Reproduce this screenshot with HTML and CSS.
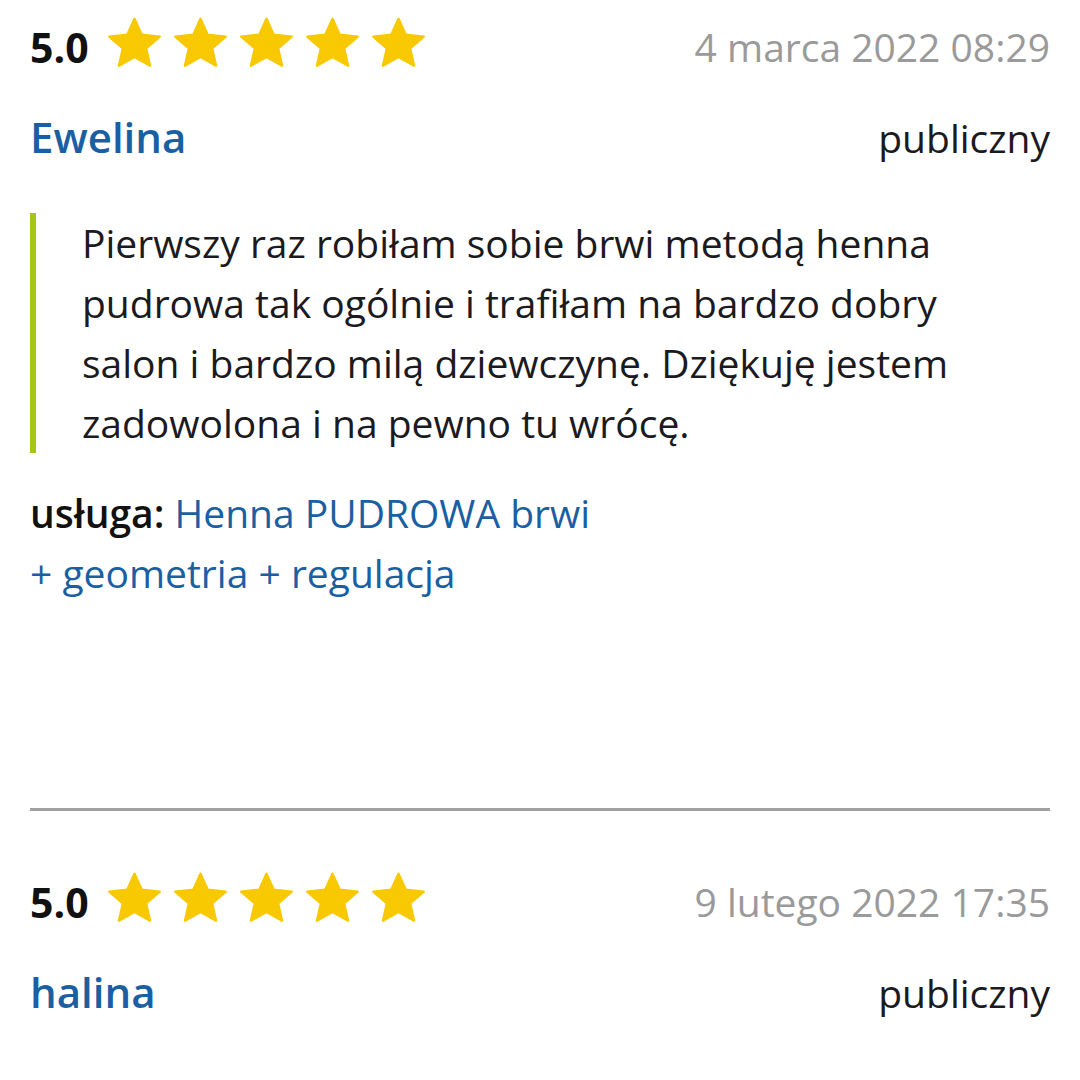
FILE: index.html
```html
<!DOCTYPE HTML>
<html>
<head>
<meta charset="utf-8">
<title>Opinie</title>
<link rel="stylesheet" href="styles.css">
</head>

<body>
<div class="reviews">
	<div class="review">
		<div class="review-head">
			<span class="score">5.0</span>
			<span class="stars">
				<svg viewBox="0 0 60 60"><polygon points="30,3 37.6,19.6 56.6,21.7 42.3,34.1 46.4,52.3 30,43 13.6,52.3 17.7,34.1 3.4,21.7 22.4,19.6" /></svg>
				<svg viewBox="0 0 60 60"><polygon points="30,3 37.6,19.6 56.6,21.7 42.3,34.1 46.4,52.3 30,43 13.6,52.3 17.7,34.1 3.4,21.7 22.4,19.6" /></svg>
				<svg viewBox="0 0 60 60"><polygon points="30,3 37.6,19.6 56.6,21.7 42.3,34.1 46.4,52.3 30,43 13.6,52.3 17.7,34.1 3.4,21.7 22.4,19.6" /></svg>
				<svg viewBox="0 0 60 60"><polygon points="30,3 37.6,19.6 56.6,21.7 42.3,34.1 46.4,52.3 30,43 13.6,52.3 17.7,34.1 3.4,21.7 22.4,19.6" /></svg>
				<svg viewBox="0 0 60 60"><polygon points="30,3 37.6,19.6 56.6,21.7 42.3,34.1 46.4,52.3 30,43 13.6,52.3 17.7,34.1 3.4,21.7 22.4,19.6" /></svg>
			</span>
			<span class="date">4 marca 2022 08:29</span>
		</div>
		<div class="review-meta">
			<a href="javascript:;" class="author">Ewelina</a>
			<span class="status">publiczny</span>
		</div>
		<blockquote class="review-text">Pierwszy raz robiłam sobie brwi metodą henna pudrowa tak ogólnie i trafiłam na bardzo dobry salon i bardzo milą dziewczynę. Dziękuję jestem zadowolona i na pewno tu wrócę.</blockquote>
		<p class="service"><b>usługa:</b> <a href="javascript:;">Henna PUDROWA brwi + geometria + regulacja</a></p>
	</div>

	<hr class="divider">

	<div class="review">
		<div class="review-head">
			<span class="score">5.0</span>
			<span class="stars">
				<svg viewBox="0 0 60 60"><polygon points="30,3 37.6,19.6 56.6,21.7 42.3,34.1 46.4,52.3 30,43 13.6,52.3 17.7,34.1 3.4,21.7 22.4,19.6" /></svg>
				<svg viewBox="0 0 60 60"><polygon points="30,3 37.6,19.6 56.6,21.7 42.3,34.1 46.4,52.3 30,43 13.6,52.3 17.7,34.1 3.4,21.7 22.4,19.6" /></svg>
				<svg viewBox="0 0 60 60"><polygon points="30,3 37.6,19.6 56.6,21.7 42.3,34.1 46.4,52.3 30,43 13.6,52.3 17.7,34.1 3.4,21.7 22.4,19.6" /></svg>
				<svg viewBox="0 0 60 60"><polygon points="30,3 37.6,19.6 56.6,21.7 42.3,34.1 46.4,52.3 30,43 13.6,52.3 17.7,34.1 3.4,21.7 22.4,19.6" /></svg>
				<svg viewBox="0 0 60 60"><polygon points="30,3 37.6,19.6 56.6,21.7 42.3,34.1 46.4,52.3 30,43 13.6,52.3 17.7,34.1 3.4,21.7 22.4,19.6" /></svg>
			</span>
			<span class="date">9 lutego 2022 17:35</span>
		</div>
		<div class="review-meta">
			<a href="javascript:;" class="author">halina</a>
			<span class="status">publiczny</span>
		</div>
	</div>
</div>
</body>
</html>
```

FILE: styles.css
```css
* {margin:0; padding:0;}
body {background:#fff; font-family:"Open Sans", "Noto Sans", sans-serif; color:#1a1a20;}
a {text-decoration:none; color:#1b5fa3;}

.reviews {padding:0 30px; overflow:hidden;}
.review {padding-top:17px;}

.review-head {display:flex; align-items:center; height:60px;}
.score {font-size:41px; font-weight:700; line-height:60px; color:#111;}
.stars {display:flex; gap:9px; margin-left:17px; margin-bottom:5px;}
.stars svg {width:57px; height:57px; display:block;}
.stars polygon {fill:#f8c800; stroke:#f8c800; stroke-width:2.5; stroke-linejoin:round;}
.date {margin-left:auto; font-size:39px; line-height:60px; color:#9a9a9a;}

.review-meta {display:flex; justify-content:space-between; align-items:baseline; margin-top:30px; line-height:60px;}
.author {font-size:42px; font-weight:600;}
.status {font-size:39px;}

.review-text {margin-top:45px; padding:0 60px 0 46px; border-left:6px solid #a6c51b; font-size:39px; line-height:60px;}

.service {width:575px; margin-top:30px; padding-bottom:205px; font-size:39px; line-height:60px;}
.service b {font-weight:600; color:#111;}

.divider {height:3px; border:0; background:#a0a0a0; margin-bottom:44px;}
```
